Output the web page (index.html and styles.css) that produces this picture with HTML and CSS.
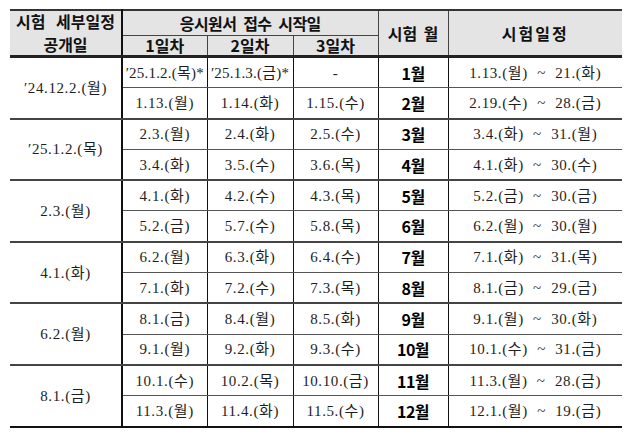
FILE: index.html
```html
<!DOCTYPE html>
<html lang="ko">
<head>
<meta charset="utf-8">
<link rel="stylesheet" href="styles.css">
</head>
<body>
<div class="wrap">
<table class="sched">
  <colgroup>
    <col class="c1"><col class="c2"><col class="c3"><col class="c4"><col class="c5"><col class="c6">
  </colgroup>
  <thead>
    <tr class="h1">
      <th rowspan="2" class="first"><div class="two"><span>시험 세부일정</span><span>공개일</span></div></th>
      <th colspan="3" class="apply">응시원서 접수 시작일</th>
      <th rowspan="2">시험 월</th>
      <th rowspan="2" class="wide">시험일정</th>
    </tr>
    <tr class="h2">
      <th>1일차</th><th>2일차</th><th>3일차</th>
    </tr>
  </thead>
  <tbody>
    <tr>
      <td rowspan="2" class="first">′24.12.2.(월)</td>
      <td class="tight">′25.1.2.(목)*</td><td class="tight">′25.1.3.(금)*</td><td>-</td>
      <td class="mon">1월</td><td class="range">1.13.(월) ~ 21.(화)</td>
    </tr>
    <tr class="gend">
      <td>1.13.(월)</td><td>1.14.(화)</td><td>1.15.(수)</td>
      <td class="mon">2월</td><td class="range">2.19.(수) ~ 28.(금)</td>
    </tr>
    <tr>
      <td rowspan="2" class="first">′25.1.2.(목)</td>
      <td>2.3.(월)</td><td>2.4.(화)</td><td>2.5.(수)</td>
      <td class="mon">3월</td><td class="range">3.4.(화) ~ 31.(월)</td>
    </tr>
    <tr class="gend">
      <td>3.4.(화)</td><td>3.5.(수)</td><td>3.6.(목)</td>
      <td class="mon">4월</td><td class="range">4.1.(화) ~ 30.(수)</td>
    </tr>
    <tr>
      <td rowspan="2" class="first">2.3.(월)</td>
      <td>4.1.(화)</td><td>4.2.(수)</td><td>4.3.(목)</td>
      <td class="mon">5월</td><td class="range">5.2.(금) ~ 30.(금)</td>
    </tr>
    <tr class="gend">
      <td>5.2.(금)</td><td>5.7.(수)</td><td>5.8.(목)</td>
      <td class="mon">6월</td><td class="range">6.2.(월) ~ 30.(월)</td>
    </tr>
    <tr>
      <td rowspan="2" class="first">4.1.(화)</td>
      <td>6.2.(월)</td><td>6.3.(화)</td><td>6.4.(수)</td>
      <td class="mon">7월</td><td class="range">7.1.(화) ~ 31.(목)</td>
    </tr>
    <tr class="gend">
      <td>7.1.(화)</td><td>7.2.(수)</td><td>7.3.(목)</td>
      <td class="mon">8월</td><td class="range">8.1.(금) ~ 29.(금)</td>
    </tr>
    <tr>
      <td rowspan="2" class="first">6.2.(월)</td>
      <td>8.1.(금)</td><td>8.4.(월)</td><td>8.5.(화)</td>
      <td class="mon">9월</td><td class="range">9.1.(월) ~ 30.(화)</td>
    </tr>
    <tr class="gend">
      <td>9.1.(월)</td><td>9.2.(화)</td><td>9.3.(수)</td>
      <td class="mon">10월</td><td class="range">10.1.(수) ~ 31.(금)</td>
    </tr>
    <tr>
      <td rowspan="2" class="first lastgrp">8.1.(금)</td>
      <td>10.1.(수)</td><td>10.2.(목)</td><td>10.10.(금)</td>
      <td class="mon">11월</td><td class="range">11.3.(월) ~ 28.(금)</td>
    </tr>
    <tr class="last">
      <td>11.3.(월)</td><td>11.4.(화)</td><td>11.5.(수)</td>
      <td class="mon">12월</td><td class="range">12.1.(월) ~ 19.(금)</td>
    </tr>
  </tbody>
</table>
</div>
</body>
</html>
```

FILE: styles.css
```css
html, body {
  margin: 0;
  padding: 0;
  background: #ffffff;
}
.wrap {
  padding: 9px 7px 0 10px;
}
.sched {
  border-collapse: collapse;
  table-layout: fixed;
  width: 612px;
  font-family: "Liberation Serif", "Noto Sans CJK KR", serif;
  font-size: 15px;
  color: #1e1e1e;
}
.c1 { width: 112px; }
.c2 { width: 85px; }
.c3 { width: 86px; }
.c4 { width: 85px; }
.c5 { width: 70px; }
.c6 { width: 174px; }

.sched th {
  background: #e4e4e4;
  font-family: "Noto Sans CJK KR", sans-serif;
  font-weight: 700;
  font-size: 16px;
  color: #111;
  line-height: 19px;
  padding: 0;
  border: 1px solid #444;
  text-align: center;
  letter-spacing: 0;
  word-spacing: 2px;
}
.sched th.apply {
  letter-spacing: -0.6px;
  word-spacing: 3px;
}
.sched th.wide {
  letter-spacing: 2px;
}
.sched thead tr.h1 th {
  border-top: 2px solid #333;
  height: 24px;
}
.sched thead tr.h2 th {
  height: 17px;
  border-bottom: 3px solid #222;
}
.sched thead th[rowspan] {
  border-bottom: 3px solid #222;
}
.sched th.first {
  border-left: none;
  border-right: 2px solid #111;
  word-spacing: 6px;
}
.two {
  display: flex;
  flex-direction: column;
  justify-content: space-between;
  align-items: center;
  height: 42px;
}
.sched th:last-child {
  border-right: none;
}
.sched td {
  height: 29.3px;
  padding: 0;
  text-align: center;
  border: 1px solid #555;
  border-left: 1px solid #111;
  border-right: 1px solid #111;
  line-height: 18px;
  white-space: nowrap;
  letter-spacing: 0.6px;
}
.sched td.range {
  word-spacing: 5px;
}
.sched td.first {
  border-left: none;
  border-right: 2px solid #111;
  border-bottom: 2px solid #444;
}
.sched td.first.lastgrp {
  border-bottom: 2px solid #111;
}
.sched td:last-child {
  border-right: none;
}
.sched tr.gend td {
  border-bottom: 2px solid #444;
}
.sched tr.last td {
  border-bottom: 2px solid #111;
}
.sched td.tight {
  letter-spacing: 0.2px;
}
.sched td.mon {
  font-family: "Noto Sans CJK KR", sans-serif;
  font-weight: 700;
  font-size: 16px;
  color: #000;
  letter-spacing: -0.5px;
}
```
